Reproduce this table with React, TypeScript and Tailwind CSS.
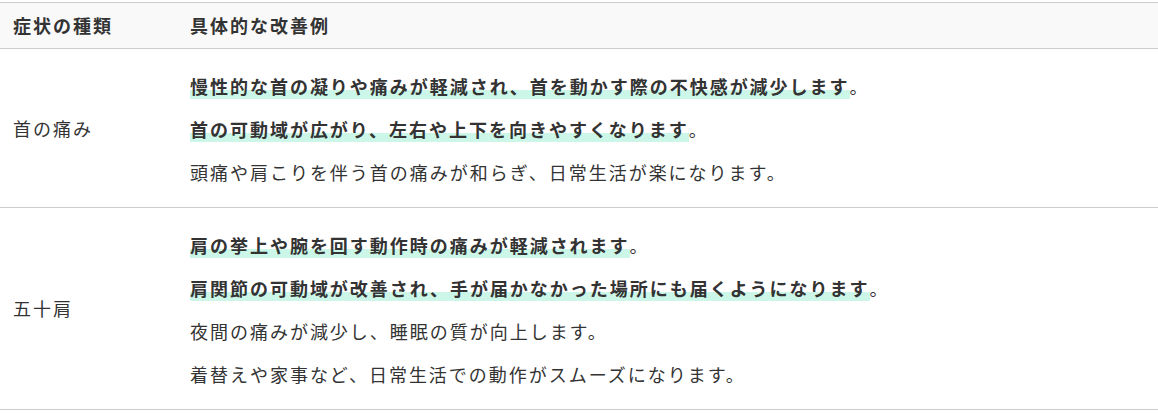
const rows = [
  {
    symptom: "首の痛み",
    items: [
      { text: "慢性的な首の凝りや痛みが軽減され、首を動かす際の不快感が減少します", mark: true },
      { text: "首の可動域が広がり、左右や上下を向きやすくなります", mark: true },
      { text: "頭痛や肩こりを伴う首の痛みが和らぎ、日常生活が楽になります", mark: false },
    ],
  },
  {
    symptom: "五十肩",
    items: [
      { text: "肩の挙上や腕を回す動作時の痛みが軽減されます", mark: true },
      { text: "肩関節の可動域が改善され、手が届かなかった場所にも届くようになります", mark: true },
      { text: "夜間の痛みが減少し、睡眠の質が向上します", mark: false },
      { text: "着替えや家事など、日常生活での動作がスムーズになります", mark: false },
    ],
  },
];

export default function App() {
  return (
    <div
      className="bg-white pt-[2px] text-[#333]"
      style={{ fontFamily: '"Noto Sans CJK JP", "Noto Sans", sans-serif' }}
    >
      <table className="w-full border-collapse text-[18px] tracking-[0.11em]">
        <thead>
          <tr className="border-y border-[#cccccc] bg-[#f9f9f9]">
            <th className="w-[190px] px-[13px] py-[9px] text-left font-bold leading-[27px]">
              症状の種類
            </th>
            <th className="py-[9px] text-left font-bold leading-[27px]">具体的な改善例</th>
          </tr>
        </thead>
        <tbody>
          {rows.map((row) => (
            <tr key={row.symptom} className="border-b border-[#cccccc]">
              <td className="px-[13px] align-middle leading-[27px]">{row.symptom}</td>
              <td className="pt-[24px] pb-[21px] pr-4">
                <div className="flex flex-col gap-[16px]">
                  {row.items.map((item, i) => (
                    <p key={i} className="leading-[27px]">
                      {item.mark ? (
                        <strong className="bg-[linear-gradient(transparent_67%,#ccf7e8_67%)] font-bold">
                          {item.text}
                        </strong>
                      ) : (
                        item.text
                      )}
                      。
                    </p>
                  ))}
                </div>
              </td>
            </tr>
          ))}
        </tbody>
      </table>
    </div>
  );
}
